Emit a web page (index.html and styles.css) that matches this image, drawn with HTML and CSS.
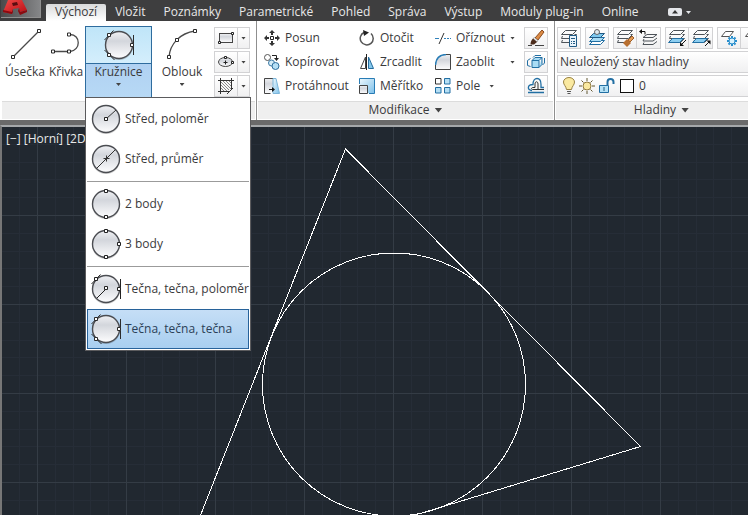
FILE: index.html
```html
<!DOCTYPE html>
<html lang="cs">
<head>
<meta charset="utf-8">
<title>Výchozí</title>
<link rel="stylesheet" href="styles.css">
</head>
<body>
<svg class="defs" aria-hidden="true">
  <defs>
    <linearGradient id="disc" x1="0" y1="0" x2="0" y2="1"><stop offset="0" stop-color="#f0f1f4"/><stop offset=".35" stop-color="#d3d6dc"/><stop offset="1" stop-color="#fdfdfe"/></linearGradient>
    <linearGradient id="blue" x1="0" y1="0" x2="1" y2="1"><stop offset="0" stop-color="#eef8fd"/><stop offset="1" stop-color="#7cc0ea"/></linearGradient>
    <linearGradient id="red" x1="0" y1="0" x2="1" y2="1"><stop offset="0" stop-color="#f04a48"/><stop offset="1" stop-color="#b80d14"/></linearGradient>
    <symbol id="base" viewBox="0 0 32 32"><circle cx="16" cy="17" r="14" fill="#000" opacity=".2"/><circle cx="16" cy="16" r="13.5" fill="url(#disc)" stroke="#4b4d52" stroke-width="1.400"/></symbol>
    <symbol id="ttt" viewBox="0 0 32 32"><use href="#base"/><path d="M30.500 6v20M1.500 11L10.500 1.500M1.500 21l10 10" fill="none" stroke="#2b2b2b"/><g fill="#fff" stroke="#2b2b2b"><path d="M4.500 4.500h3v3h-3zM4.500 24.500h3v3h-3zM27.500 14.500h3v3h-3z"/></g></symbol>
    <symbol id="layers" viewBox="0 0 20 20"><path d="M6.500 2.500h11l-4 4h-11zM3.500 8l-1 2.500h11l4-4h-2M3.500 12l-1 2.500h11l4-4h-2" fill="none" stroke="#4d5359"/></symbol>
  </defs>
</svg>

<header class="tabbar">
  <button class="app" aria-label="Aplikace"><svg width="39" height="17" viewBox="0 0 39 17"><path d="M7 0h14l5 10-7 2-1-4-6 1-1 5-9-2z" fill="url(#red)"/><path d="M2 10v2l9 2 1-2v-3l-1 3zM18 8l1 4 7-2v2l-7 3-2-4z" fill="#8b0a10"/><path d="M11 3l5-1 1 3-5 1z" fill="#5a0d10"/></svg></button>
  <nav class="tabs">
    <a class="tab active" href="#">Výchozí</a><a class="tab" href="#">Vložit</a><a class="tab" href="#">Poznámky</a><a class="tab" href="#">Parametrické</a><a class="tab" href="#">Pohled</a><a class="tab" href="#">Správa</a><a class="tab" href="#">Výstup</a><a class="tab" href="#">Moduly plug-in</a><a class="tab" href="#">Online</a>
  </nav>
  <button class="collapse" aria-label="Minimalizovat pás karet"><svg width="24" height="8" viewBox="0 0 24 8"><rect x="0" y="0" width="14" height="8" rx="2" fill="#e4e6ea"/><path d="M4 5.500h6L7 2z" fill="#333"/><path d="M18 3h5l-2.500 3z" fill="#e4e6ea"/></svg></button>
</header>

<section class="ribbon">
  <section class="panel draw">
    <div class="tools">
      <button class="big line"><svg width="32" height="32" viewBox="0 0 32 32"><path d="M4 29L30 3" stroke="#4a4a4a" stroke-width="1.300"/><path d="M2.500 27.500h3v3h-3zM28.500 1.500h3v3h-3z" fill="#fff" stroke="#2b2b2b"/></svg><span>Úsečka</span></button>
      <button class="big poly"><svg width="32" height="32" viewBox="0 0 32 32"><path d="M3 23.500h17c11-1 11-17 0-17" fill="none" stroke="#4a4a4a" stroke-width="1.300"/><path d="M1.500 22h3v3h-3zM17.500 22h3v3h-3zM17.500 5h3v3h-3z" fill="#fff" stroke="#2b2b2b"/></svg><span>Křivka</span></button>
      <div class="circle-wrap">
        <button class="big circle" aria-expanded="true"><span class="top"><svg width="32" height="32"><use href="#ttt"/></svg></span><span class="bottom"><span>Kružnice</span><i class="caret"></i></span></button>
        <div class="menu">
          <button><svg width="32" height="32" viewBox="0 0 32 32"><use href="#base"/><path d="M16 16L26 7" stroke="#333"/><path d="M14.500 14.500h3v3h-3z" fill="#fff" stroke="#222"/></svg>Střed, poloměr</button>
          <button><svg width="32" height="32" viewBox="0 0 32 32"><use href="#base"/><path d="M6.500 25.500L25.500 6.500M13.500 15.500h6M16.500 12.500v6" stroke="#333"/></svg>Střed, průměr</button>
          <hr>
          <button><svg width="32" height="32" viewBox="0 0 32 32"><use href="#base"/><path d="M14.500 1.500h3v3h-3zM14.500 27.500h3v3h-3z" fill="#fff" stroke="#222"/></svg>2 body</button>
          <button><svg width="32" height="32" viewBox="0 0 32 32"><use href="#base"/><path d="M14.500 1.500h3v3h-3zM14.500 27.500h3v3h-3zM27.500 14.500h3v3h-3z" fill="#fff" stroke="#222"/></svg>3 body</button>
          <hr>
          <button><svg width="32" height="32" viewBox="0 0 32 32"><use href="#base"/><path d="M1.500 11L10.500 1.500M30.500 6v20M16 16l-9 9" stroke="#222"/><path d="M4.500 4.500h3v3h-3zM27.500 14.500h3v3h-3zM14.500 13.500h3v3h-3z" fill="#fff" stroke="#222"/></svg>Tečna, tečna, poloměr</button>
          <button class="selected"><svg width="32" height="32"><use href="#ttt"/></svg>Tečna, tečna, tečna</button>
        </div>
      </div>
      <button class="big arc"><svg width="32" height="32" viewBox="0 0 32 32"><path d="M3 29C4 16 14 5 29 3" fill="none" stroke="#4a4a4a" stroke-width="1.300"/><path d="M1.500 27.500h3v3h-3zM9.500 10.500h3v3h-3zM27.500 1.500h3v3h-3z" fill="#fff" stroke="#2b2b2b"/></svg><span>Oblouk</span><i class="caret"></i></button>
      <div class="splits">
        <div class="split"><button aria-label="Obdélník"><svg width="18" height="18" viewBox="0 0 18 18"><rect x="2.500" y="4.500" width="13" height="9" fill="url(#disc)" stroke="#444"/><path d="M1.500 12.500h2v2h-2zM14.500 3.500h2v2h-2z" fill="#fff" stroke="#222"/></svg></button><button aria-label="Další obdélníky"><i class="caret"></i></button></div>
        <div class="split"><button aria-label="Elipsa"><svg width="18" height="18" viewBox="0 0 18 18"><ellipse cx="8.500" cy="9" rx="7" ry="4.500" fill="url(#disc)" stroke="#444"/><path d="M6.500 9.500h4M8.500 7.500v4" stroke="#222"/><path d="M14.500 8.500h2v2h-2zM7.500 3.500h2v2h-2z" fill="#fff" stroke="#222"/></svg></button><button aria-label="Další elipsy"><i class="caret"></i></button></div>
        <div class="split"><button aria-label="Šrafování"><svg width="18" height="18" viewBox="0 0 18 18"><path d="M3.500 1v16M14.500 1v11M1 3.500h16M1 14.500h11M10 17l6-6" stroke="#333" fill="none"/><path d="M4 11l3 3M4 8l6 6M4 5l8 8M6 4l8 8M9 4l5 5M12 4l2 2" stroke="#888"/></svg></button><button aria-label="Další výplně"><i class="caret"></i></button></div>
      </div>
    </div>
    <div class="title"></div>
  </section>

  <section class="panel modify">
    <div class="tools">
      <button class="cmd"><svg viewBox="0 0 16 16"><path d="M6.500 6.500h3v3h-3z" fill="#fff" stroke="#222"/><path d="M8 0l3 3H9v2H7V3H5zM8 16l3-3H9v-2H7v2H5zM0 8l3-3v2h2v2H3v2zM16 8l-3-3v2h-2v2h2v2z" fill="#333"/></svg>Posun</button>
      <button class="cmd"><svg viewBox="0 0 16 16"><path d="M5 2.500a6.500 6.500 0 1 0 7 1" fill="none" stroke="#555" stroke-width="1.500"/><path d="M4 0l6 2.500L5 6z" fill="#222"/></svg>Otočit</button>
      <button class="cmd"><svg viewBox="0 0 16 16"><path d="M0 8.500h4M9 8.500h2M12 8.500h2M15 8.500h1" stroke="#3181ba"/><path d="M4 14L9 3" stroke="#333"/></svg>Oříznout<i class="caret"></i></button>
      <button class="tool" aria-label="Vymazat"><svg viewBox="0 0 18 18"><path d="M1 16.500h4M8 16.500h9" stroke="#444"/><path d="M8 9l7-8 2 2-6 8z" fill="#dd8c45" stroke="#8a4a1e"/><path d="M7.500 8.500l3.500 3-1 1.500-4-3.500z" fill="#eee" stroke="#777" stroke-width=".5"/><path d="M6 9.500l4 3.500-3 2.500H3.500c0-2 .5-4 2.500-6z" fill="#4b2b1b"/></svg></button>
      <button class="cmd"><svg viewBox="0 0 16 16"><circle cx="3.500" cy="3.500" r="3" fill="#fff" stroke="#555"/><circle cx="7.500" cy="9" r="3" fill="#d6edf8" stroke="#3b79a5"/><circle cx="11.500" cy="12" r="3.500" fill="#b5dff5" stroke="#2c6c9b"/><path d="M8 1.500h4.500v3" fill="none" stroke="#222"/><path d="M10 4h5l-2.500 3z" fill="#222"/></svg>Kopírovat</button>
      <button class="cmd"><svg viewBox="0 0 16 16"><path d="M6.500 3v11.500h-5z" fill="#fff" stroke="#444"/><path d="M9.500 3v11.500h5z" fill="#86c9ed" stroke="#246b9c"/><path d="M7.500 0v16" stroke="#222"/></svg>Zrcadlit</button>
      <button class="cmd"><svg viewBox="0 0 16 16"><path d="M.500 15.500V11Q2 1 11 .500h4.500v15z" fill="url(#disc)"/><path d="M11 .500h4.500v15H.500V11" fill="none" stroke="#444"/><path d="M.500 11Q1 1 11 .500" fill="none" stroke="#287cb5" stroke-width="1.500"/></svg>Zaoblit<i class="caret"></i></button>
      <button class="tool" aria-label="Rozložit"><svg viewBox="0 0 18 18"><path d="M5 7.500h7v7H5zM5 7.500l3-3h7l-3 3M12 14.500l3-3v-7" fill="#a9dcf5" stroke="#226fa3"/><path d="M3.500 5.500l-3 2v5l3 1M14 2.500H8l-2 2M17.500 5v5l-2 2" fill="none" stroke="#226fa3"/></svg></button>
      <button class="cmd"><svg viewBox="0 0 16 16"><path d="M10.500.500H.500v15h6" fill="url(#disc)" stroke="#444"/><path d="M9 .500h3L15.500 15.500H9z" fill="url(#blue)" stroke="#7db6da"/><path d="M5 11.500h4" stroke="#111"/><path d="M8 9v5l3-2.500z" fill="#111"/></svg>Protáhnout</button>
      <button class="cmd"><svg viewBox="0 0 16 16"><path d="M.500 6V.500h15v15H10" fill="url(#blue)" stroke="#287cb5"/><path d="M.500 7.500h8v8h-8z" fill="url(#disc)" stroke="#444"/></svg>Měřítko</button>
      <button class="cmd"><svg viewBox="0 0 16 16"><path d="M.500.500h5.500v5.500H.500z" fill="#fff" stroke="#333"/><path d="M9.500.500H15v5.500H9.500zM.500 9.500H6V15H.500zM9.500 9.500H15V15H9.500z" fill="#b5dff5" stroke="#226fa3"/></svg>Pole<i class="caret near"></i></button>
      <button class="tool" aria-label="Odsadit"><svg viewBox="0 0 18 18"><path d="M1 15.500h16M5 13.500c-5 0-5-6 1-6 0-8 8-8 8 0v3h3" fill="none" stroke="#226fa3" stroke-width="1.300"/><path d="M17 12.500H6c-2 0-2-2 0-2h2V7c0-3 3-3 3 0v5" fill="none" stroke="#333"/></svg></button>
    </div>
    <div class="title"><button>Modifikace<i class="caret wide"></i></button></div>
  </section>

  <section class="panel layers">
    <div class="tools">
      <div class="iconbar">
        <div class="group"><button aria-label="Vlastnosti hladiny"><svg viewBox="0 0 20 20"><use href="#layers"/><path d="M10.500 7.500h7v11h-7z" fill="#eaf4fb" stroke="#205a85"/><path d="M12 10.500h4M12 13.500h1M14 13.500h2M12 15.500h1M14 15.500h2" stroke="#205a85"/></svg></button></div>
        <div class="group"><button aria-label="Nastavit hladinu jako aktuální"><svg viewBox="0 0 20 20"><path d="M6.500 12.500h11l-4 4h-11z" fill="#fff" stroke="#226fa3"/><path d="M6.500 9.500h11l-4 4h-11z" fill="#a9dcf5" stroke="#226fa3"/><path d="M6.500 5.500h11l-4 4h-11z" fill="#7ec8ee" stroke="#205a85"/><circle cx="10" cy="4" r="2.500" fill="#dfeaf0" stroke="#666"/></svg></button></div>
        <div class="group"><button aria-label="Sjednotit"><svg viewBox="0 0 20 20"><use href="#layers"/><path d="M17 8l2 2-4 4-2-2z" fill="#e49b55" stroke="#9c5d28"/><path d="M12 11l4 4-4 4-4-4z" fill="#b86f30"/></svg></button><button aria-label="Předchozí"><svg viewBox="0 0 20 20"><path d="M8 6.500h10l-4 3H4zM5 11l-1 2h10l4-3M5 14.500l-1 2h10l4-3" fill="none" stroke="#4d5359"/><path d="M2 3.500h4v3" fill="none" stroke="#111"/><path d="M0 3.500l3-2.500v5z" fill="#111"/></svg></button></div>
        <div class="group"><button aria-label="Izolovat"><svg viewBox="0 0 20 20"><use href="#layers"/><path d="M5.500 10.500h11l-4 4h-11z" fill="#8bcdf0" stroke="#226fa3"/><path d="M19 12l-4 4" stroke="#111"/><path d="M13 18v-4l4 4z" fill="#111"/></svg></button><button aria-label="Zrušit izolaci"><svg viewBox="0 0 20 20"><use href="#layers"/><path d="M5.500 10.500h11l-4 4h-11z" fill="#8bcdf0" stroke="#226fa3"/><path d="M14 18l4-4" stroke="#111"/><path d="M19.500 12.500v4l-4-4z" fill="#111"/></svg></button></div>
        <div class="group"><button aria-label="Zmrazit"><svg viewBox="0 0 20 20"><path d="M6.500 3.500h8l-4 5h-8z" fill="#fff" stroke="#555"/><path d="M13 8v10M8 13h10M9.500 9.500l7 7M16.500 9.500l-7 7" stroke="#278dcc" stroke-width="2"/><circle cx="13" cy="13" r="3" fill="#d9f1fc" stroke="#278dcc"/></svg></button><button aria-label="Vypnout"><svg viewBox="0 0 20 20"><path d="M6.500 3.500h8l-4 5h-8z" fill="#fff" stroke="#555"/></svg></button></div>
      </div>
      <select class="state" aria-label="Stav hladiny"><option>Neuložený stav hladiny</option></select>
      <button class="current">
        <svg width="14" height="18" viewBox="0 0 14 18"><path d="M4.500 12.500C4 9 1.500 8 1.500 5a5.500 4.500 0 0 1 11 0c0 3-2.500 4-3 7.500z" fill="#fae9a0" stroke="#9a8343"/><path d="M5 14.500h4M5.500 16.500h3" stroke="#555"/></svg>
        <svg width="16" height="16" viewBox="0 0 16 16"><path d="M8 0v3M8 13v3M0 8h3M13 8h3M2.500 2.500l2 2M11.500 11.500l2 2M2.500 13.500l2-2M11.500 4.500l2-2" stroke="#635832"/><circle cx="8" cy="8" r="4" fill="#fae9a0" stroke="#927b3e"/></svg>
        <svg width="17" height="16" viewBox="0 0 17 16"><path d="M9.500 7V4q0-3 3-3t3 3v2" fill="none" stroke="#226fa3" stroke-width="2"/><path d="M1.500 7.500h9v7h-9z" fill="#b5e2f7" stroke="#226fa3"/><path d="M6 9v4" stroke="#225f85"/></svg>
        <span class="swatch"></span><span>0</span>
      </button>
    </div>
    <div class="title"><button>Hladiny<i class="caret wide"></i></button></div>
  </section>
</section>

<main class="canvas">
  <svg class="drawing" aria-label="Výkres">
    <defs>
      <pattern id="grid" patternUnits="userSpaceOnUse" x="35" y="88" width="89" height="89">
        <path d="M18.500 0v89M36.500 0v89M53.500 0v89M71.500 0v89M0 18.500h89M0 36.500h89M0 53.500h89M0 71.500h89" stroke="#262d37"/>
        <path d="M.500 0v89M0 .500h89" stroke="#343c45"/>
      </pattern>
    </defs>
    <rect width="100%" height="100%" fill="url(#grid)"/>
    <g transform="translate(-2 -127)" fill="none" stroke="#fff" shape-rendering="crispEdges">
      <path d="M161 615L345.500 149L640.500 446.500L300 550"/>
      <circle cx="394" cy="384.500" r="131.500"/>
    </g>
  </svg>
  <p class="viewlabel">[−] [Horní] [2D</p>
</main>
</body>
</html>
```
FILE: styles.css
```css
* { box-sizing: border-box; }
body {
  margin: 0;
  height: 100vh;
  display: flex;
  flex-direction: column;
  overflow: hidden;
  background: #3c3c3c;
  color: #3a3a3c;
  font: 12px/16px "Open Sans", "Noto Sans", sans-serif;
}
button, select { font: inherit; color: inherit; border: 0; background: none; padding: 0; margin: 0; }
svg { display: block; flex: none; }
.defs { position: absolute; width: 0; height: 0; }

.tabbar { display: flex; flex: none; height: 21px; padding-left: 1px; background: #3e3e3f; }
.app { width: 40px; height: 18px; border: 1px solid #909090; border-top: 0; border-left: 0; background: linear-gradient(90deg, #4a4a4b, #858688); }
.tabs { display: flex; align-items: flex-end; margin-left: 5px; }
.tab { height: 17px; padding: 0 9px; color: #e8e8e8; text-decoration: none; white-space: nowrap; }
.tab.active { background: linear-gradient(#d9dadb, #fff); color: #3a3a3c; border-radius: 2px 2px 0 0; }
.collapse { margin: 3px 0 0 20px; }

.ribbon { display: flex; flex: none; padding-left: 1px; background: #fff; border-bottom: 5px solid #6a6a6a; }
.panel { display: flex; flex-direction: column; flex: none; height: 99px; padding: 5px 1px 1px; border-right: 1px solid #8f8f8f; }
.panel .tools { height: 74px; }
.title { height: 18px; margin-top: 1px; background: #efefef; border-top: 1px solid #dcdcdc; text-align: center; }
.title button { display: inline-flex; align-items: center; gap: 5px; line-height: 16px; }
.caret { width: 5px; height: 3px; background: #444; clip-path: polygon(0 0, 100% 0, 50% 100%); }
.caret.wide { width: 8px; height: 5px; }

.draw { width: 256px; }
.draw .tools { display: flex; }
.big { display: flex; flex-direction: column; align-items: center; height: 71px; padding-top: 2px; white-space: nowrap; }
.big > span:not(.top):not(.bottom) { margin-top: 4px; }
.big .caret { margin-top: 3px; }
.line { width: 44px; margin-left: 1px; }
.poly { width: 38px; }
.circle-wrap { position: relative; z-index: 2; width: 67px; }
.circle { width: 100%; padding: 0; border: 1px solid #2e6c9e; border-bottom: 0; background: #b3d5f2; }
.top, .bottom { display: flex; flex-direction: column; align-items: center; width: 100%; }
.top { height: 37px; padding-top: 2px; background: linear-gradient(#bfe5f8, #d4eefc); border-bottom: 1px solid #2e6c9e; }
.bottom { flex: 1; background: linear-gradient(#b0d1f2, #b7d9f5); }
.arc { width: 60px; }
.splits { display: flex; flex-direction: column; gap: 2px; width: 36px; margin-left: 2px; padding-top: 1px; }
.split { display: flex; height: 22px; border: 1px solid #d2d2d4; background: linear-gradient(#fff, #f0f0f1); }
.split button { display: flex; align-items: center; justify-content: center; flex: 1; }
.split button:first-child { flex: none; width: 23px; border-right: 1px solid #d2d2d4; }

.menu { position: absolute; left: 0; top: 71px; width: 166px; padding: 1px; background: #fff; border: 1px solid #5b5b5d; display: flex; flex-direction: column; }
.menu button { display: flex; align-items: center; gap: 3px; height: 40px; padding: 0 0 0 2px; border: 1px solid transparent; white-space: nowrap; }
.menu hr { width: 100%; height: 1px; margin: 2px 0; border: 0; background: #9b9b9b; }
.menu .selected { border-color: #27629a; background: linear-gradient(#c5def6, #a9cff0); color: #2b3f57; }

.modify { width: 298px; }
.modify .tools { display: grid; grid-template-columns: 95px 76px 89px 24px; grid-auto-rows: 22px; row-gap: 2px; padding: 1px 0 0 6px; }
.cmd { display: flex; align-items: center; gap: 5px; white-space: nowrap; }
.cmd svg { width: 16px; height: 16px; }
.cmd .caret { margin: 0 9px 0 auto; }
.cmd .caret.near { margin: 0 0 0 4px; }
.tool { display: flex; align-items: center; justify-content: center; border: 1px solid #d2d2d4; background: linear-gradient(#fff, #f0f0f1); }
.tool svg { width: 18px; height: 18px; }

.layers { flex: 1 0 214px; }
.layers .tools { display: flex; flex-direction: column; gap: 2px; padding: 1px 0 0 1px; }
.iconbar { display: flex; gap: 4px; height: 22px; }
.group { display: flex; border: 1px solid #d2d2d4; background: linear-gradient(#fff, #f0f0f1); }
.group button { display: flex; align-items: center; justify-content: center; width: 22px; }
.group button + button { width: 24px; border-left: 1px solid #d2d2d4; }
.group svg { width: 20px; height: 20px; }
.state, .current { width: 100%; height: 22px; border: 1px solid #d2d2d4; background: linear-gradient(#fff, #f0f0f1); }
.state { appearance: none; padding: 0 2px; }
.current { display: flex; align-items: center; gap: 3px; padding-left: 4px; }
.swatch { width: 14px; height: 14px; margin: 0 2px; border: 1px solid #111; background: #fff; }

.canvas { position: relative; flex: 1; min-height: 0; background: #212830; border-top: 2px solid #a5a8aa; border-left: 2px solid #777; overflow: hidden; }
.drawing { width: 100%; height: 100%; }
.viewlabel { position: absolute; left: 4px; top: 4px; margin: 0; color: #e8e8e8; font-weight: 500; white-space: nowrap; }
```
